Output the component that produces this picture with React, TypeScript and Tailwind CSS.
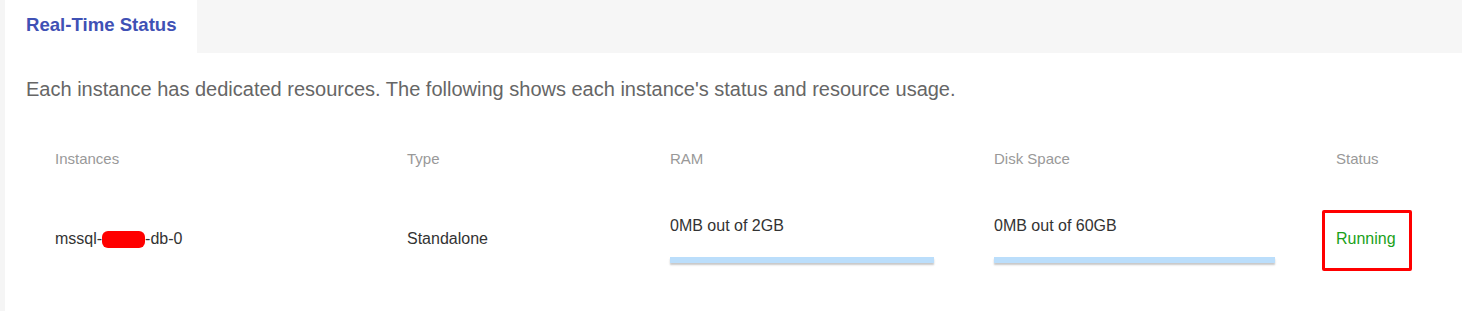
export default function App() {
  const rows = [
    {
      name: "mssql-",
      suffix: "-db-0",
      type: "Standalone",
      ram: "0MB out of 2GB",
      disk: "0MB out of 60GB",
      status: "Running",
    },
  ];

  return (
    <div className="min-h-[311px] w-[1462px] bg-[#f5f5f5] pl-[5px] font-['Liberation_Sans',Arial,sans-serif]">
      <div className="min-h-[311px] bg-white">
        {/* Tabs */}
        <div className="flex h-[53px] bg-[#f6f6f6]">
          <div className="flex w-[192px] items-center bg-white pl-[21px] pb-[4px]">
            <span className="text-[18.6px] font-bold text-[#3f51b5]">Real-Time Status</span>
          </div>
        </div>

        <p className="mt-6 pl-[21px] text-[20px] leading-6 text-[#666]">
          Each instance has dedicated resources. The following shows each instance's status and resource usage.
        </p>

        {/* Table */}
        <div className="mt-12 pl-[50px]">
          <div className="grid grid-cols-[352px_263px_324px_342px_1fr] text-[15px] leading-5 text-[#999]">
            <div>Instances</div>
            <div>Type</div>
            <div>RAM</div>
            <div>Disk Space</div>
            <div>Status</div>
          </div>

          {rows.map((row, i) => (
            <div
              key={i}
              className="mt-[24px] grid h-[92px] grid-cols-[352px_263px_324px_342px_1fr] items-center text-[16px] leading-5 text-[#333]"
            >
              <div className="flex items-center">
                {row.name}
                <span className="inline-block h-[17px] w-[43px] rounded-[6px] bg-[#ff0000]" />
                {row.suffix}
              </div>
              <div>{row.type}</div>
              <div className="flex flex-col gap-[21px]">
                <span>{row.ram}</span>
                <div className="h-[6px] w-[264px] bg-[#bbdefb] shadow-[0_2px_2px_rgba(0,0,0,0.22)]" />
              </div>
              <div className="flex flex-col gap-[21px]">
                <span>{row.disk}</span>
                <div className="h-[6px] w-[281px] bg-[#bbdefb] shadow-[0_2px_2px_rgba(0,0,0,0.22)]" />
              </div>
              <div>
                <span className="relative text-[#1aa11a]">
                  {row.status}
                  <span className="absolute -left-[14px] -right-[16px] -top-[20px] -bottom-[24px] rounded-[2px] border-[3px] border-[#ff0000]" />
                </span>
              </div>
            </div>
          ))}
        </div>
      </div>
    </div>
  );
}
